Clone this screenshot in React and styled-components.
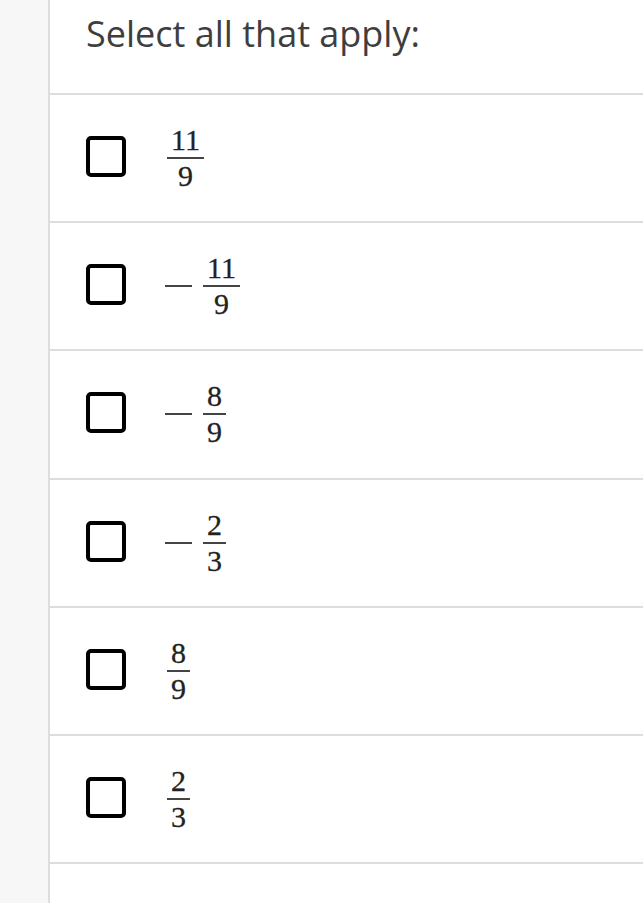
import styled, { createGlobalStyle } from 'styled-components';

const GlobalStyle = createGlobalStyle`
    body {
        margin: 0;
        background: #fff;
        font-family: 'Open Sans', 'Liberation Sans', sans-serif;
    }
`;

const Page = styled.div`
    display: flex;
    min-height: 100vh;
`;

const Sidebar = styled.div`
    width: 48px;
    flex-shrink: 0;
    background-color: #f7f7f7;
    border-right: 2px solid #dddddd;
`;

const Main = styled.div`
    flex: 1;
    display: flex;
    flex-direction: column;
`;

const Prompt = styled.div`
    height: 95px;
    box-sizing: border-box;
    padding: 9px 0 0 36px;
    font-size: 36px;
    color: #3e3e3e;
    border-bottom: 2px solid #dddddd;
`;

const OptionRow = styled.div`
    height: 128.2px;
    box-sizing: border-box;
    display: flex;
    align-items: center;
    gap: 39px;
    padding: 0 0 0 36px;
    border-bottom: 2px solid #dddddd;
`;

const Checkbox = styled.div`
    width: 40px;
    height: 41px;
    box-sizing: border-box;
    border: 4px solid #000;
    border-radius: 5px;
    flex-shrink: 0;
    margin-bottom: 3px;
`;

const MathExpr = styled.div`
    display: inline-flex;
    align-items: center;
    font-family: 'Liberation Serif', 'DejaVu Serif', serif;
    font-size: 30px;
    color: #222;
    -webkit-text-stroke: 0.3px #222;
`;

const Minus = styled.span`
    width: 27px;
    height: 2px;
    background-color: #444;
    margin-right: 9px;
`;

const Frac = styled.span`
    display: inline-flex;
    flex-direction: column;
    align-items: center;
    margin-left: 2px;
`;

const Part = styled.span`
    line-height: 1;
    padding: 0 4px;
    margin: ${(p) => (p.$den ? '2px 0 0' : '0 0 2px')};
`;

const Bar = styled.span`
    align-self: stretch;
    height: 2px;
    background-color: #444;
`;

const options = [
    { neg: false, num: 11, den: 9 },
    { neg: true, num: 11, den: 9 },
    { neg: true, num: 8, den: 9 },
    { neg: true, num: 2, den: 3 },
    { neg: false, num: 8, den: 9 },
    { neg: false, num: 2, den: 3 },
];

export default function App() {
    return (
        <Page>
            <GlobalStyle />
            <Sidebar />
            <Main>
                <Prompt>Select all that apply:</Prompt>
                {options.map((o, i) => (
                    <OptionRow key={i}>
                        <Checkbox />
                        <MathExpr>
                            {o.neg && <Minus />}
                            <Frac>
                                <Part>{o.num}</Part>
                                <Bar />
                                <Part $den>{o.den}</Part>
                            </Frac>
                        </MathExpr>
                    </OptionRow>
                ))}
            </Main>
        </Page>
    );
}
